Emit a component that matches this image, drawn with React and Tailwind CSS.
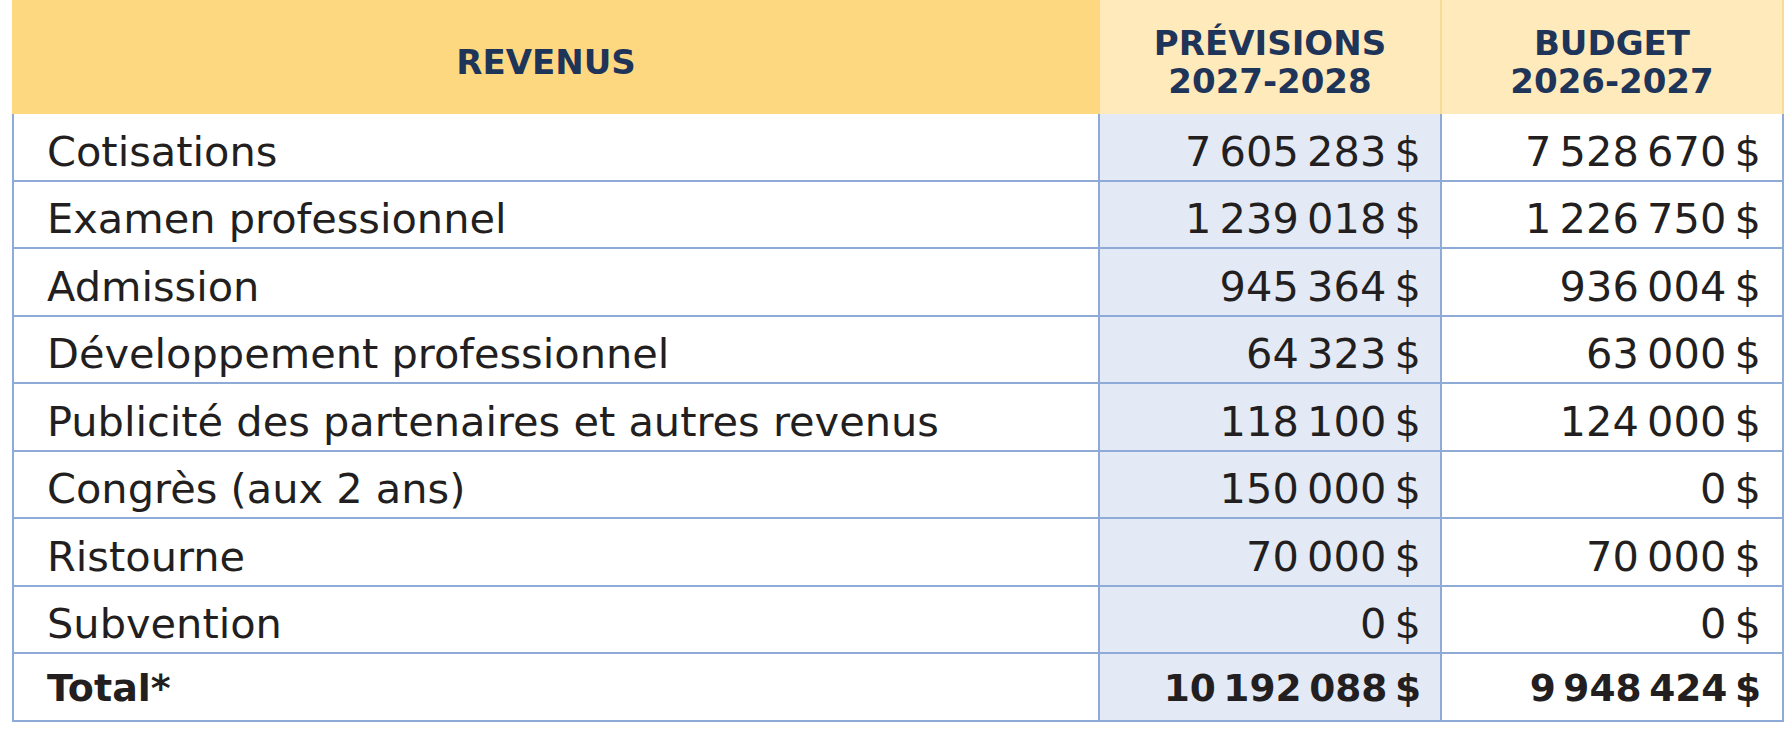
import React from "react";

const rows = [
  ["Cotisations", "7 605 283 $", "7 528 670 $"],
  ["Examen professionnel", "1 239 018 $", "1 226 750 $"],
  ["Admission", "945 364 $", "936 004 $"],
  ["Développement professionnel", "64 323 $", "63 000 $"],
  ["Publicité des partenaires et autres revenus", "118 100 $", "124 000 $"],
  ["Congrès (aux 2 ans)", "150 000 $", "0 $"],
  ["Ristourne", "70 000 $", "70 000 $"],
  ["Subvention", "0 $", "0 $"],
];

const thin = (s) => s.replace(/ /g, "\u2009");

export default function App() {
  return (
    <div
      className="w-[1792px] h-[740px] bg-white"
      style={{ fontFamily: '"DejaVu Sans", "Liberation Sans", sans-serif' }}
    >
      <div className="ml-[12px] w-[1772px]">
        {/* Header */}
        <div className="flex h-[114px] text-[#1e3459] font-bold text-[34px] leading-[38px] text-center">
          <div className="w-[1088px] bg-[#fdd881] flex items-center justify-center pt-[10px] pr-[20px]">
            REVENUS
          </div>
          <div className="w-[340px] bg-[#ffeabc] flex items-center justify-center pt-[10px]">
            <div>
              PRÉVISIONS
              <br />
              2027-2028
            </div>
          </div>
          <div className="w-[2px] bg-[#f9dc94]" />
          <div className="w-[340px] bg-[#ffeabc] flex items-center justify-center pt-[10px]">
            <div>
              BUDGET
              <br />
              2026-2027
            </div>
          </div>
          <div className="w-[2px] bg-[#f9dc94]" />
        </div>

        {/* Body */}
        <div className="border-x-2 border-b-2 border-[#8eaad7] text-[#231f20]">
          {rows.map(([label, a, b], i) => (
            <div
              key={i}
              className="flex h-[67.5px] border-b-2 border-[#8eaad7] text-[41.5px] leading-[48px]"
            >
              <div className="w-[1084px] flex items-center pt-[10px] pl-[33px] whitespace-nowrap">
                {label}
              </div>
              <div className="w-[342px] border-l-2 border-[#8eaad7] bg-[#e3eaf6] flex items-center justify-end pt-[10px] pr-[19px] whitespace-nowrap">
                {thin(a)}
              </div>
              <div className="w-[342px] border-l-2 border-[#8eaad7] flex items-center justify-end pt-[10px] pr-[21px] whitespace-nowrap">
                {thin(b)}
              </div>
            </div>
          ))}
          <div className="flex h-[65.5px] font-bold leading-[48px]">
            <div className="w-[1084px] flex items-center pt-[2px] pl-[33px] text-[38px] whitespace-nowrap">
              Total*
            </div>
            <div className="w-[342px] border-l-2 border-[#8eaad7] bg-[#e3eaf6] flex items-center justify-end pt-[2px] pr-[19px] text-[37.5px] whitespace-nowrap">
              {thin("10 192 088 $")}
            </div>
            <div className="w-[342px] border-l-2 border-[#8eaad7] flex items-center justify-end pt-[2px] pr-[21px] text-[37.5px] whitespace-nowrap">
              {thin("9 948 424 $")}
            </div>
          </div>
        </div>
      </div>
    </div>
  );
}
